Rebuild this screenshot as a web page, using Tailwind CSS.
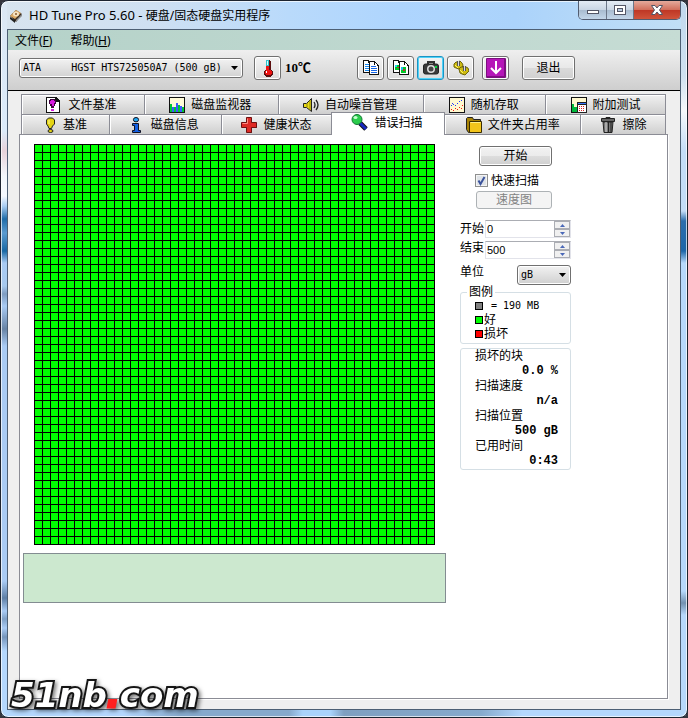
<!DOCTYPE html>
<html lang="zh-CN">
<head>
<meta charset="utf-8">
<meta name="viewport" content="width=device-width, initial-scale=1">
<title>HD Tune Pro 5.60</title>
<script src="https://cdn.jsdelivr.net/npm/@tailwindcss/browser@4"></script>
</head>
<body class="bg-[#35353d] text-black font-['Liberation_Sans','Noto_Sans_CJK_SC',sans-serif] text-xs leading-[15px]">
<div class="relative min-h-screen flex flex-col rounded-lg border border-[#1d2430] px-[6px] pb-[7px] bg-[#b4d7fd] bg-[linear-gradient(180deg,#dbe7f4_0,#dcebfa_130px,#e7d2da_150px,#f2f6fb_175px,#f5f9ff_195px,#a9cdf3_205px,#1f6ca8_218px,#5a9ad0_232px,#1868a4_250px,#a9cbf4_262px,#a7c9ee_285px,#7f9cc0_293px,#a9cbf4_305px,#6783a5_328px,#a9cbf4_345px,#a9cbf4_580px,#5e7fa6_597px,#a9cbf4_610px,#7fa0c6_618px,#a9cbf4_627px,#7494bb_636px,#b4d7fd_650px),linear-gradient(180deg,#c0d8ee_0,#cfe1f0_75px,#f5f8fb_110px,#c3dcf7_150px,#c3dcf7_210px,#2c6dac_220px,#1f66a8_250px,#b6d8fb_262px,#b6d8fb_590px,#7391b0_602px,#b6d8fb_614px),linear-gradient(90deg,#d8e4ef_0,#cfe0f2_22%,#b9dafb_42%,#aed5fe_58%,#abd3fb_75%,#c2dff5_100%),linear-gradient(90deg,#b4d7fd_18%,#86a9cc_26%,#86a9cc_42%,#a9d3fb_44%,#a9d3fb_48%,#7f9fc0_50%,#86aacd_70%,#b4d7fd_76%)] bg-[size:6px_100%,6px_100%,100%_28px,100%_7px] bg-[position:left_top,right_top,left_top,left_bottom] bg-no-repeat shadow-[inset_0_0_0_1px_#ffffffb0]">

  <header class="flex h-7 items-start justify-between">
    <h1 class="flex items-center gap-[6px] pt-[6px] pl-[2px] font-['Noto_Sans','Noto_Sans_CJK_SC',sans-serif] text-xs leading-4 font-normal">
      <svg class="size-[14px]" viewBox="0 0 14 14" aria-hidden="true"><path d="M1 7 7 1l6 4-6 8z" fill="#3a2c20"/><path d="M1 7 7 1l5 3-6 6z" fill="#d9a765"/><ellipse cx="7" cy="5" rx="3" ry="2.500" fill="#f5e3c2"/><circle cx="7" cy="5" r="1" fill="#8a5a30"/><path d="M1 8l5 3v3l-5-4z" fill="#222"/><path d="M7 11l6-6v2l-6 6z" fill="#8f8f8f"/></svg>
      <span class="whitespace-nowrap"><span class="text-[13px]">HD Tune Pro 5.60 - </span>硬盘/固态硬盘实用程序</span>
    </h1>
    <div class="flex h-[19px] overflow-hidden rounded-b-[5px] border border-t-0 border-[#525c70]">
      <button type="button" aria-label="最小化" class="flex w-7 items-center justify-center border-r border-[#6b7688] bg-[linear-gradient(180deg,#e3ebf4_0,#c9d6e4_48%,#a8bbcf_50%,#c3d6e9_100%)]"><svg class="h-3 w-[14px]" viewBox="0 0 14 12" shape-rendering="crispEdges"><path d="M1 6h12v4H1z" fill="#535666"/><path d="M2 7h10v2H2z" fill="#fff"/></svg></button>
      <button type="button" aria-label="最大化" class="flex w-[27px] items-center justify-center border-r border-[#6b7688] bg-[linear-gradient(180deg,#e3ebf4_0,#c9d6e4_48%,#a8bbcf_50%,#c3d6e9_100%)]"><svg class="h-3 w-3" viewBox="0 0 12 12" shape-rendering="crispEdges"><path d="M0 1h12v10H0z" fill="#535666"/><path d="M1 2h10v8H1z" fill="#fff"/><path d="M3 4h6v4H3z" fill="#535666"/><path d="M4 5h4v2H4z" fill="#b8cbe0"/></svg></button>
      <button type="button" aria-label="关闭" class="flex w-[46px] items-center justify-center bg-[linear-gradient(180deg,#e5aa9c_0,#d2705d_48%,#be3624_50%,#d0543b_100%)]"><svg class="h-3 w-[14px]" viewBox="0 0 14 12"><path d="M1.500 1.500h3.500l2 2.500 2-2.500h3.500L9.500 6l3 4.500H9L7 8l-2 2.500H1.500l3-4.500z" fill="#fff" stroke="#535666"/></svg></button>
    </div>
  </header>

  <div class="flex flex-1 flex-col border border-[#4d5f74] bg-[#efefef]">
    <nav class="flex h-5 items-center gap-[18px] bg-linear-to-r from-[#b5d2c9] to-[#c6dcd4] pl-[7px] font-['Noto_Sans','Noto_Sans_CJK_SC',sans-serif]">
      <a href="#file">文件(<u>F</u>)</a>
      <a href="#help">帮助(<u>H</u>)</a>
    </nav>

    <div class="flex h-[41px] items-center border-b border-black bg-linear-to-b from-[#efefef] to-[#cecece] pl-[11px] pb-[5px]">
      <div class="relative w-[224px]">
        <select aria-label="驱动器" class="block h-5 w-full appearance-none rounded-[3px] border border-[#707070] bg-linear-to-b from-[#f2f2f2] to-[#d2d2d2] pl-[3px] font-['DejaVu_Sans_Mono',monospace] text-[10px] leading-[14px] shadow-[inset_0_0_0_1px_#fff]"><option>ATA&nbsp;&nbsp;&nbsp;&nbsp;&nbsp;HGST HTS725050A7 (500 gB)</option></select>
        <svg class="pointer-events-none absolute top-2 right-[5px] h-1 w-[7px]" viewBox="0 0 7 4"><path d="M0 0h7L3.500 4z"/></svg>
      </div>
      <button type="button" aria-label="温度" class="ml-[11px] flex h-6 w-[27px] items-center justify-center rounded-[3px] border border-[#707070] bg-linear-to-b from-[#f4f4f4] to-[#dcdcdc] shadow-[inset_0_0_0_1px_#fff]"><svg class="h-[18px] w-3" viewBox="0 0 12 18" shape-rendering="crispEdges"><path d="M4 1h4v1h1v9h1v1h1v4h-1v1H9v1H4v-1H3v-1H2v-4h1v-1h1z" fill="#5c1010"/><path d="M4 1h3v6H4z" fill="#30c4cc"/><path d="M5 2h1v4H5z" fill="#d4ffff"/><path d="M4 7h3v4h2v1h1v3H9v1H4v-1H3v-3h1z" fill="#ee1212"/><path d="M4 12h1v2H4z" fill="#fff"/></svg></button>
      <span class="ml-[4px] w-[72px] font-['Liberation_Serif','Noto_Sans_CJK_SC',serif] text-[13px] font-bold">10℃</span>
      <div class="flex gap-[3px]">
        <button type="button" aria-label="复制文本" class="flex h-6 w-[27px] items-center justify-center rounded-[3px] border border-[#707070] bg-linear-to-b from-[#f4f4f4] to-[#dcdcdc] shadow-[inset_0_0_0_1px_#fff]"><svg class="h-4 w-4" viewBox="0 0 16 16" shape-rendering="crispEdges"><path d="M0 0h6v1h1v1h1v11H0z" fill="#111"/><path d="M1 1h4v2h2v9H1z" fill="#fff"/><path d="M2 4h4v1H2zm0 2h4v1H2zm0 2h4v1H2zm0 2h4v1H2z" fill="#1687ee"/><path d="M6 1h6v1h1v1h1v1h1v1h1v10H6z" fill="#111"/><path d="M7 2h4v3h3v1h1v8H7z" fill="#fff"/><path d="M12 3h1v1h1v1h-2z" fill="#fff"/><path d="M8 6h5v1H8zm0 2h6v1H8zm0 2h6v1H8zm0 2h6v1H8z" fill="#1566e8"/></svg></button>
        <button type="button" aria-label="复制图像" class="flex h-6 w-[27px] items-center justify-center rounded-[3px] border border-[#707070] bg-linear-to-b from-[#f4f4f4] to-[#dcdcdc] shadow-[inset_0_0_0_1px_#fff]"><svg class="h-4 w-4" viewBox="0 0 16 16" shape-rendering="crispEdges"><path d="M0 0h6v1h1v1h1v11H0z" fill="#111"/><path d="M1 1h4v2h2v9H1z" fill="#fff"/><path d="M2 5h4v5H2z" fill="#00c928"/><path d="M2 5h2v2H2z" fill="#20d8f0"/><path d="M4 7h2v1H4z" fill="#c3302a"/><path d="M6 1h6v1h1v1h1v1h1v1h1v10H6z" fill="#111"/><path d="M7 2h4v3h3v1h1v8H7z" fill="#fff"/><path d="M12 3h1v1h1v1h-2z" fill="#fff"/><path d="M8 7h5v6H8z" fill="#00c928"/><path d="M8 7h2v3H8z" fill="#22bbf0"/><path d="M10 9h2v2h-2z" fill="#c3302a"/></svg></button>
        <button type="button" aria-label="截图" class="flex h-6 w-[27px] items-center justify-center rounded-[3px] border border-[#1b94c4] bg-linear-to-b from-[#f4f4f4] to-[#dcdcdc] shadow-[inset_0_0_0_1px_#4fd2f8]"><svg class="h-[14px] w-4" viewBox="0 0 16 14"><path d="M5 3V1h6v2" fill="none" stroke="#333" stroke-width="2"/><rect x=".5" y="3" width="15" height="10" rx="2" fill="#3a3a3a" stroke="#222"/><circle cx="8" cy="8" r="4" fill="#ddd"/><circle cx="8" cy="8" r="2.500" fill="#444"/><path d="M12 5h2v2h-2z" fill="#00d840"/></svg></button>
        <button type="button" aria-label="选项" class="flex h-6 w-[27px] items-center justify-center rounded-[3px] border border-[#707070] bg-linear-to-b from-[#f4f4f4] to-[#dcdcdc] shadow-[inset_0_0_0_1px_#fff]"><svg class="h-4 w-4" viewBox="0 0 16 16"><g fill="#cdbb10" stroke="#6e650a"><path d="M1 4l2-2 2 0 2-1 2 2 1 2-1 3-3 1-3-1-2-1z"/><path d="M6 9l2-2 2 0 3 0 2 1 1 3-2 2-2 2-3-1-2-1z"/></g><path d="M5.500 1v5M11.500 6v5" stroke="#555" stroke-width="3"/><path d="M5.500 1v5M11.500 6v5" stroke="#ddd"/><path d="M2 5l3 3M7 10l3 3" stroke="#fff266"/></svg></button>
      </div>
      <button type="button" aria-label="保存" class="ml-[8px] flex h-6 w-[27px] items-center justify-center rounded-[3px] border border-[#707070] bg-linear-to-b from-[#f4f4f4] to-[#dcdcdc] shadow-[inset_0_0_0_1px_#fff]"><svg class="h-5 w-5" viewBox="0 0 20 20"><rect width="20" height="20" rx="1" fill="#7d0f80"/><path d="M1 1h17v17H1z" fill="#b516b8"/><path d="M10 3v12M5 10l5 5 5-5" fill="none" stroke="#fff" stroke-width="2"/></svg></button>
      <button type="button" class="ml-[13px] h-6 w-[53px] rounded-[3px] border border-[#707070] bg-[linear-gradient(180deg,#f2f2f2_0,#e8e8e8_50%,#dadada_52%,#d0d0d0_100%)] pt-[2px] shadow-[inset_0_0_0_1px_#fff]">退出</button>
    </div>

    <main class="flex flex-1 flex-col pt-[3px] pr-[12px] pb-[10px] pl-[11px]">
      <div role="tablist" class="pr-[2px] pl-[2px]">
        <div class="grid h-5 grid-cols-[123fr_134fr_146fr_122fr_120fr] border-r border-[#8b8c95]">
          <button type="button" role="tab" class="flex items-center justify-center gap-[7px] border-t border-l border-[#8b8c95] bg-linear-to-b from-[#f1f1f1] to-[#cfcfcf] pr-1 shadow-[inset_1px_1px_0_#fff]"><svg class="size-4" viewBox="0 0 16 16" shape-rendering="crispEdges"><path d="M1 0h10l4 4v12H1z" fill="#111"/><path d="M2 1h8v4h4v10H2z" fill="#fff"/><path d="M5 2h5v1h1v4h-1v2H9v2H6V9H5V7H4V3h1z" fill="#400040"/><path d="M6 3h3v1h1v2H9v3H7V7H5V4h1zM6 12h3v2H6z" fill="#d81be0"/></svg><span class="pt-[2px]">文件基准</span></button>
          <button type="button" role="tab" class="flex items-center justify-center gap-[6px] border-t border-l border-[#8b8c95] bg-linear-to-b from-[#f1f1f1] to-[#cfcfcf] pr-[2px] shadow-[inset_1px_1px_0_#fff]"><svg class="size-4" viewBox="0 0 16 16" shape-rendering="crispEdges"><path d="M0 0h16v16H0z" fill="#111"/><path d="M1 1h14v14H1z" fill="#fffbd8"/><path d="M1 7h2v8H1zM5 10h2v5H5zM9 8h2v7H9zM13 10h2v5h-2z" fill="#00c838"/><path d="M3 10h2v5H3zM7 6h2v9H7zM11 9h2v6h-2z" fill="#3f59ff"/></svg><span class="pt-[2px]">磁盘监视器</span></button>
          <button type="button" role="tab" class="flex items-center justify-center gap-[6px] border-t border-l border-[#8b8c95] bg-linear-to-b from-[#f1f1f1] to-[#cfcfcf] pr-[2px] shadow-[inset_1px_1px_0_#fff]"><svg class="size-4" viewBox="0 0 16 16"><path d="M.500 6.500h3l5-5v13l-5-4h-3z" fill="#e9dc18" stroke="#222"/><path d="M4 6v4M7 3v10" stroke="#8f860a"/><path d="M11 5q2 3 0 6M13 3q4 5 0 10" fill="none" stroke="#222" stroke-width="1.300"/></svg><span class="pt-[2px]">自动噪音管理</span></button>
          <button type="button" role="tab" class="flex items-center justify-center gap-[6px] border-t border-l border-[#8b8c95] bg-linear-to-b from-[#f1f1f1] to-[#cfcfcf] pr-[2px] shadow-[inset_1px_1px_0_#fff]"><svg class="size-4" viewBox="0 0 16 16" shape-rendering="crispEdges"><path d="M0 0h16v16H0z" fill="#111"/><path d="M1 1h14v14H1z" fill="#fff8cf"/><path d="M2 8h1v1H2zm2-1h1v1H4zm2 1h1v1H6zm2-2h1v1H8zm2-2h1v1h-1zm2-1h1v1h-1zM3 6h1v1H3z" fill="#2438ff"/><path d="M2 12h1v1H2zm2 1h1v1H4zm2-2h1v1H6zm2 1h1v1H8zm2-2h1v1h-1zm2 1h1v1h-1zm1-3h1v1h-1z" fill="#f01818"/></svg><span class="pt-[2px]">随机存取</span></button>
          <button type="button" role="tab" class="flex items-center justify-center gap-[6px] border-t border-l border-[#8b8c95] bg-linear-to-b from-[#f1f1f1] to-[#cfcfcf] shadow-[inset_1px_1px_0_#fff]"><svg class="size-4" viewBox="0 0 16 16" shape-rendering="crispEdges"><path d="M0 0h16v16H0z" fill="#111"/><path d="M1 1h14v14H1z" fill="#fff8cf"/><path d="M1 7h2v8H1zM3 10h3v5H3z" fill="#00b83c"/><path d="M6 5h10v11H6z" fill="#222"/><path d="M7 8h8v7H7z" fill="#fff"/><path d="M8 9h1v1H8zm2 0h1v1h-1zm2 0h1v1h-1zM8 11h1v1H8zm2 0h1v1h-1zm2 0h1v1h-1zM8 13h1v1H8zm2 0h1v1h-1zm2 0h1v1h-1z" fill="#d22"/><path d="M7 6h8v1H7z" fill="#3878ff"/></svg><span class="pt-[2px]">附加测试</span></button>
        </div>
        <div class="grid h-5 grid-cols-[88fr_112fr_110fr_115fr_135fr_85fr] border-r border-[#8b8c95]">
          <button type="button" role="tab" class="flex items-center justify-center gap-[7px] border-t border-l border-[#8b8c95] bg-linear-to-b from-[#f1f1f1] to-[#cfcfcf] shadow-[inset_1px_1px_0_#fff]"><svg class="size-4" viewBox="0 0 16 16"><path d="M8.500 1h4l2 2v4l-2 2-1 2.500H9L8 9 6.500 7V3z" fill="#e4d414" stroke="#222"/><path d="M9 3v4" stroke="#fff9a0"/><ellipse cx="10.500" cy="14" rx="2.500" ry="1.500" fill="#e4d414" stroke="#222"/></svg><span class="pt-[2px] pr-1">基准</span></button>
          <button type="button" role="tab" class="flex items-center justify-center gap-[7px] border-t border-l border-[#8b8c95] bg-linear-to-b from-[#f1f1f1] to-[#cfcfcf] pr-1 shadow-[inset_1px_1px_0_#fff]"><svg class="size-4" viewBox="0 0 16 16"><ellipse cx="8" cy="2.700" rx="2.600" ry="2.200" fill="#20a8f4" stroke="#112"/><path d="M4.500 6.500h6v7h2v2h-8v-2h2v-5h-2z" fill="#1461e4" stroke="#112"/></svg><span class="pt-[2px]">磁盘信息</span></button>
          <button type="button" role="tab" class="flex items-center justify-center gap-[7px] border-t border-l border-[#8b8c95] bg-linear-to-b from-[#f1f1f1] to-[#cfcfcf] shadow-[inset_1px_1px_0_#fff]"><svg class="size-4" viewBox="0 0 16 16"><path d="M6 1h5v5h5v5h-5v5H6v-5H1V6h5z" fill="#555"/><path d="M5.500.500h5v5h5v5h-5v5h-5v-5h-5v-5h5z" fill="#dd2a25" stroke="#6f1010"/><path d="M6.500 1.500v5h-5" fill="none" stroke="#ff8a80"/></svg><span class="pt-[2px]">健康状态</span></button>
          <button type="button" role="tab" aria-selected="true" class="relative -mt-[2px] -mb-px flex items-center justify-center gap-[6px] border-x border-t border-[#8b8c95] bg-white pr-[2px] pb-[3px]"><svg class="size-[17px]" viewBox="0 0 17 17"><path d="M9 9l6 6" stroke="#111" stroke-width="5"/><path d="M9 9l6 6" stroke="#1828c0" stroke-width="3"/><circle cx="6" cy="5.500" r="5" fill="#2bcc4c" stroke="#173"/><ellipse cx="4.500" cy="3.500" rx="2" ry="1.500" fill="#c4ffcf"/></svg><span class="pt-[2px]">错误扫描</span></button>
          <button type="button" role="tab" class="flex items-center justify-center gap-[6px] border-t border-[#8b8c95] bg-linear-to-b from-[#f1f1f1] to-[#cfcfcf] shadow-[inset_1px_1px_0_#fff]"><svg class="size-4" viewBox="0 0 16 16"><path d="M.5 1.500l1-1h5l1 2h7v13h-12l-2-3z" fill="#a88304" stroke="#222"/><path d="M3.500 4.500h12v11h-12z" fill="#f2c41b" stroke="#3a2c00"/><path d="M4.500 5.500h10" stroke="#fff08a"/></svg><span class="pt-[2px]">文件夹占用率</span></button>
          <button type="button" role="tab" class="flex items-center justify-center gap-[7px] border-t border-l border-[#8b8c95] bg-linear-to-b from-[#f1f1f1] to-[#cfcfcf] shadow-[inset_1px_1px_0_#fff]"><svg class="size-4" viewBox="0 0 16 16"><path d="M6 2V.5h4V2" fill="none" stroke="#222"/><path d="M1.500 1.500h13v3h-13z" fill="#666" stroke="#222"/><path d="M3 5h10l-1 10.500H4z" fill="#777" stroke="#222"/><path d="M6 5v10" stroke="#ddd"/><path d="M8.500 5v10M11 5v10" stroke="#222"/></svg><span class="pt-[2px]">擦除</span></button>
        </div>
      </div>

      <section role="tabpanel" class="flex flex-1 items-start gap-[14px] border border-[#8b8c95] bg-white pt-[9px] shadow-[1px_1px_0_#fff]">
        <div class="flex w-[426px] flex-col gap-2">
          <div role="img" aria-label="扫描结果：全部区块良好" class="ml-[14px] h-[401px] w-[401px] bg-[#00ff00] bg-[linear-gradient(90deg,#000_1px,transparent_1px),linear-gradient(180deg,#000_1px,transparent_1px)] bg-[size:8px_8px]"></div>
          <div role="log" class="ml-[3px] h-[50px] border border-[#838c91] bg-[#cce8cf]"></div>
        </div>

        <form class="flex w-[111px] flex-col pt-[2px]">
          <button type="button" class="ml-[19px] h-5 w-[73px] rounded-[3px] border border-[#707070] bg-[linear-gradient(180deg,#f2f2f2_0,#ebebeb_50%,#dddddd_52%,#cfcfcf_100%)] leading-4 shadow-[inset_0_0_0_1px_#fff]">开始</button>
          <label class="mt-[6px] ml-[15px] flex h-4 items-center gap-[3px] whitespace-nowrap">
            <span class="relative flex">
              <input type="checkbox" checked class="peer size-[13px] appearance-none border border-[#8e8f8f] bg-[#dfe3e8] shadow-[inset_0_0_0_1px_#f4f4f4]">
              <svg class="pointer-events-none absolute inset-0 hidden size-[13px] peer-checked:block" viewBox="0 0 13 13"><path d="M3.500 6.500l2 3.500 4-7" fill="none" stroke="#3b539c" stroke-width="2"/></svg>
            </span>
            <span class="pt-[2px]">快速扫描</span>
          </label>
          <button type="button" disabled class="mt-[3px] ml-[16px] h-[18px] w-[76px] rounded-[3px] border border-[#adb2b5] bg-[#f4f4f4] leading-4 text-[#838383]">速度图</button>

          <div class="mt-[11px] flex items-center justify-between">
            <label for="from">开始</label>
            <div class="flex h-[18px] w-[86px] border border-[#e2e3ea] border-t-[#abadb3] bg-white">
              <input id="from" type="text" value="0" class="w-full min-w-0 pl-[1px] text-[11px] outline-none">
              <div class="flex w-4 shrink-0 flex-col">
                <button type="button" aria-label="增加开始值" class="flex flex-1 items-center justify-center border border-[#abadb3] bg-[#f0f0f0]"><svg class="h-[3px] w-[5px]" viewBox="0 0 5 3"><path d="M2.500 0L5 3H0z" fill="#4a68b8"/></svg></button>
                <button type="button" aria-label="减少开始值" class="flex flex-1 items-center justify-center border border-[#abadb3] bg-[#f0f0f0]"><svg class="h-[3px] w-[5px]" viewBox="0 0 5 3"><path d="M0 0h5L2.500 3z" fill="#4a68b8"/></svg></button>
              </div>
            </div>
          </div>
          <div class="mt-[3px] flex items-start justify-between">
            <label for="to">结束</label>
            <div class="flex h-[18px] w-[86px] border border-[#e2e3ea] border-t-[#abadb3] bg-white">
              <input id="to" type="text" value="500" class="w-full min-w-0 pl-[1px] text-[11px] outline-none">
              <div class="flex w-4 shrink-0 flex-col">
                <button type="button" aria-label="增加结束值" class="flex flex-1 items-center justify-center border border-[#abadb3] bg-[#f0f0f0]"><svg class="h-[3px] w-[5px]" viewBox="0 0 5 3"><path d="M2.500 0L5 3H0z" fill="#4a68b8"/></svg></button>
                <button type="button" aria-label="减少结束值" class="flex flex-1 items-center justify-center border border-[#abadb3] bg-[#f0f0f0]"><svg class="h-[3px] w-[5px]" viewBox="0 0 5 3"><path d="M0 0h5L2.500 3z" fill="#4a68b8"/></svg></button>
              </div>
            </div>
          </div>
          <div class="mt-[6px] flex items-start justify-between">
            <label for="unit">单位</label>
            <div class="relative w-[54px]">
              <select id="unit" class="block h-5 w-full appearance-none rounded-[3px] border border-[#707070] bg-linear-to-b from-[#f2f2f2] to-[#d0d0d0] pl-[3px] font-['DejaVu_Sans_Mono',monospace] text-[10px] leading-[14px] shadow-[inset_0_0_0_1px_#fff]"><option>gB</option><option>MB</option></select>
              <svg class="pointer-events-none absolute top-2 right-[5px] h-1 w-[7px]" viewBox="0 0 7 4"><path d="M0 0h7L3.500 4z"/></svg>
            </div>
          </div>

          <fieldset class="rounded-[3px] border border-[#d5dfe5] pb-[2px] pl-[14px]">
            <legend class="-ml-2 px-[2px] leading-[14px]">图例</legend>
            <ul class="leading-[14px]">
              <li class="flex h-[14px] items-center gap-[8px] font-['DejaVu_Sans_Mono',monospace] text-[10px]"><span class="size-2 border border-black bg-[#808080]"></span>= 190 MB</li>
              <li class="flex items-center gap-[1px]"><span class="size-2 border border-black bg-[#00ff00]"></span>好</li>
              <li class="flex items-center gap-[1px]"><span class="size-2 border border-black bg-[#ff0000]"></span>损坏</li>
            </ul>
          </fieldset>

          <dl class="mt-[4px] rounded-[3px] border border-[#d5dfe5] pr-[12px] pl-[14px]">
            <dt>损坏的块</dt>
            <dd class="text-right font-['Liberation_Mono',monospace] font-bold">0.0 %</dd>
            <dt>扫描速度</dt>
            <dd class="text-right font-['Liberation_Mono',monospace] font-bold">n/a</dd>
            <dt>扫描位置</dt>
            <dd class="text-right font-['Liberation_Mono',monospace] font-bold">500 gB</dd>
            <dt>已用时间</dt>
            <dd class="text-right font-['Liberation_Mono',monospace] font-bold">0:43</dd>
          </dl>
        </form>
      </section>
    </main>
  </div>

  <div class="absolute bottom-[5px] left-[10px] font-['DejaVu_Sans',sans-serif] text-[34px] leading-[34px] font-bold italic text-white [-webkit-text-stroke:4px_#151515] [paint-order:stroke_fill] drop-shadow-[2px_2px_2px_#00000088]">51nb<span class="text-[#ff2020] [-webkit-text-stroke:3px_#ff2020] [stroke-linejoin:round]">.</span>com</div>
</div>
</body>
</html>
